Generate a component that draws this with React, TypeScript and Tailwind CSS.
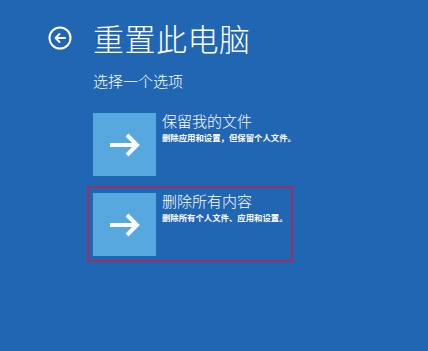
import { ReactNode } from 'react';

// ─── OPTIONS ─────────────────────────────────────────────────
type ResetOption = { title: string; desc: string; selected?: boolean };

const OPTIONS: ResetOption[] = [
  { title: '保留我的文件', desc: '删除应用和设置，但保留个人文件。' },
  { title: '删除所有内容', desc: '删除所有个人文件、应用和设置。', selected: true },
];

const FONT = "font-['Noto_Sans_CJK_SC','Noto_Sans',sans-serif]";

function BackIcon() {
  return (
    <svg width="24" height="24" viewBox="0 0 24 24" fill="none" stroke="white">
      <circle cx="12" cy="12" r="10.5" strokeWidth="2" />
      <path d="M17 12H7.5M11.5 8L7.5 12L11.5 16" strokeWidth="1.8" strokeLinecap="round" strokeLinejoin="round" />
    </svg>
  );
}

function ArrowTile() {
  return (
    <div className="w-[63px] h-[63px] shrink-0 bg-[#58a8e0] flex items-center justify-center">
      <svg width="32" height="26" viewBox="0 0 32 26" fill="none" stroke="white" strokeWidth="4" strokeLinejoin="miter">
        <path d="M1 13H28M18 3L28 13L18 23" />
      </svg>
    </div>
  );
}

function OptionRow({ option }: { option: ResetOption }): ReactNode {
  return (
    <div
      className={`w-[206px] h-[76px] border-2 pl-[4px] pt-[5px] flex gap-[6px] ${
        option.selected ? 'border-[#9a2f62]' : 'border-transparent'
      }`}
    >
      <ArrowTile />
      <div className="flex flex-col">
        <div className="text-[15px] leading-none text-white font-light">{option.title}</div>
        <div className="mt-[5px] text-[8.4px] leading-none text-white font-bold whitespace-nowrap">{option.desc}</div>
      </div>
    </div>
  );
}

export default function App() {
  return (
    <div className={`w-[428px] h-[351px] bg-[#2166b3] overflow-hidden ${FONT}`}>
      {/* header */}
      <div className="flex items-center gap-[21px] pl-[48px] pt-[22px]">
        <BackIcon />
        <h1 className="text-[31px] leading-none font-light text-white tracking-[0.5px]">重置此电脑</h1>
      </div>

      <div className="pl-[87px] pt-[20px]">
        <div className="pl-[6px] text-[15px] leading-none text-white font-light">选择一个选项</div>
        <div className="mt-[18px] flex flex-col gap-[4px]">
          {OPTIONS.map((o) => (
            <OptionRow key={o.title} option={o} />
          ))}
        </div>
      </div>
    </div>
  );
}
